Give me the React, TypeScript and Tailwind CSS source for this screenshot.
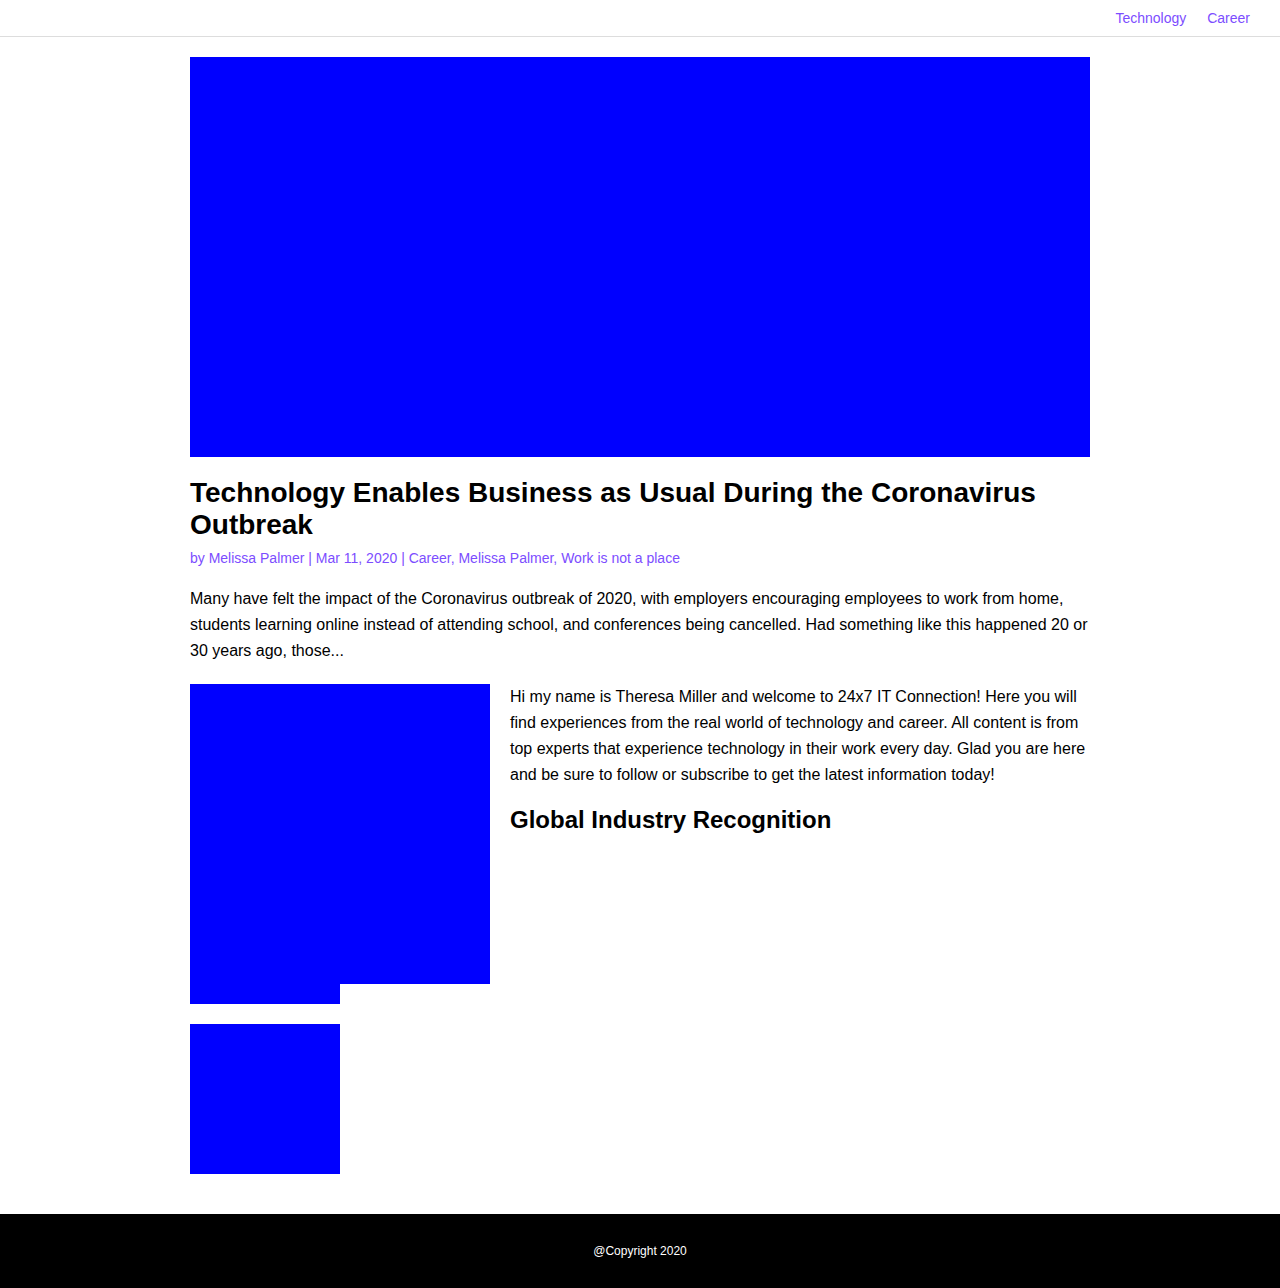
export default function App() {
  return (
    <div className="min-h-screen bg-white text-black font-['Liberation_Sans',Arial,sans-serif]">
      <header className="flex h-[37px] items-center justify-end border-b border-[#dddddd] pr-[30px]">
        <nav className="flex gap-[21px] text-[14px] text-[#7c4dff]">
          <a href="#">Technology</a>
          <a href="#">Career</a>
        </nav>
      </header>

      <main className="mx-auto w-[900px] pt-[20px] pb-[40px]">
        <div className="h-[400px] w-full bg-[#0000ff]" />

        <h1 className="mt-[20px] text-[28px] font-bold leading-[32px]">
          Technology Enables Business as Usual During the Coronavirus Outbreak
        </h1>
        <p className="mt-[8px] text-[14px] leading-[18px] text-[#7c4dff]">
          by Melissa Palmer | Mar 11, 2020 | Career, Melissa Palmer, Work is not a place
        </p>
        <p className="mt-[19px] text-[16px] leading-[26px]">
          Many have felt the impact of the Coronavirus outbreak of 2020, with employers encouraging employees to work from home, students learning online instead of attending school, and conferences being cancelled. Had something like this happened 20 or 30 years ago, those...
        </p>

        <div className="mt-[20px] flex gap-[20px]">
          <div className="flex w-[300px] shrink-0 flex-col">
            <div className="h-[300px] w-[300px] bg-[#0000ff]" />
            <div className="-mt-[130px] h-[150px] w-[150px] bg-[#0000ff]" />
            <div className="mt-[20px] h-[150px] w-[150px] bg-[#0000ff]" />
          </div>
          <div className="flex-1">
            <p className="text-[16px] leading-[26px]">
              Hi my name is Theresa Miller and welcome to 24x7 IT Connection! Here you will find experiences from the real world of technology and career. All content is from top experts that experience technology in their work every day. Glad you are here and be sure to follow or subscribe to get the latest information today!
            </p>
            <h2 className="mt-[17px] text-[24px] font-bold leading-[29px]">
              Global Industry Recognition
            </h2>
          </div>
        </div>
      </main>

      <footer className="bg-black py-[30px] text-center text-[12px] leading-[14px] text-white">
        @Copyright 2020
      </footer>
    </div>
  );
}
